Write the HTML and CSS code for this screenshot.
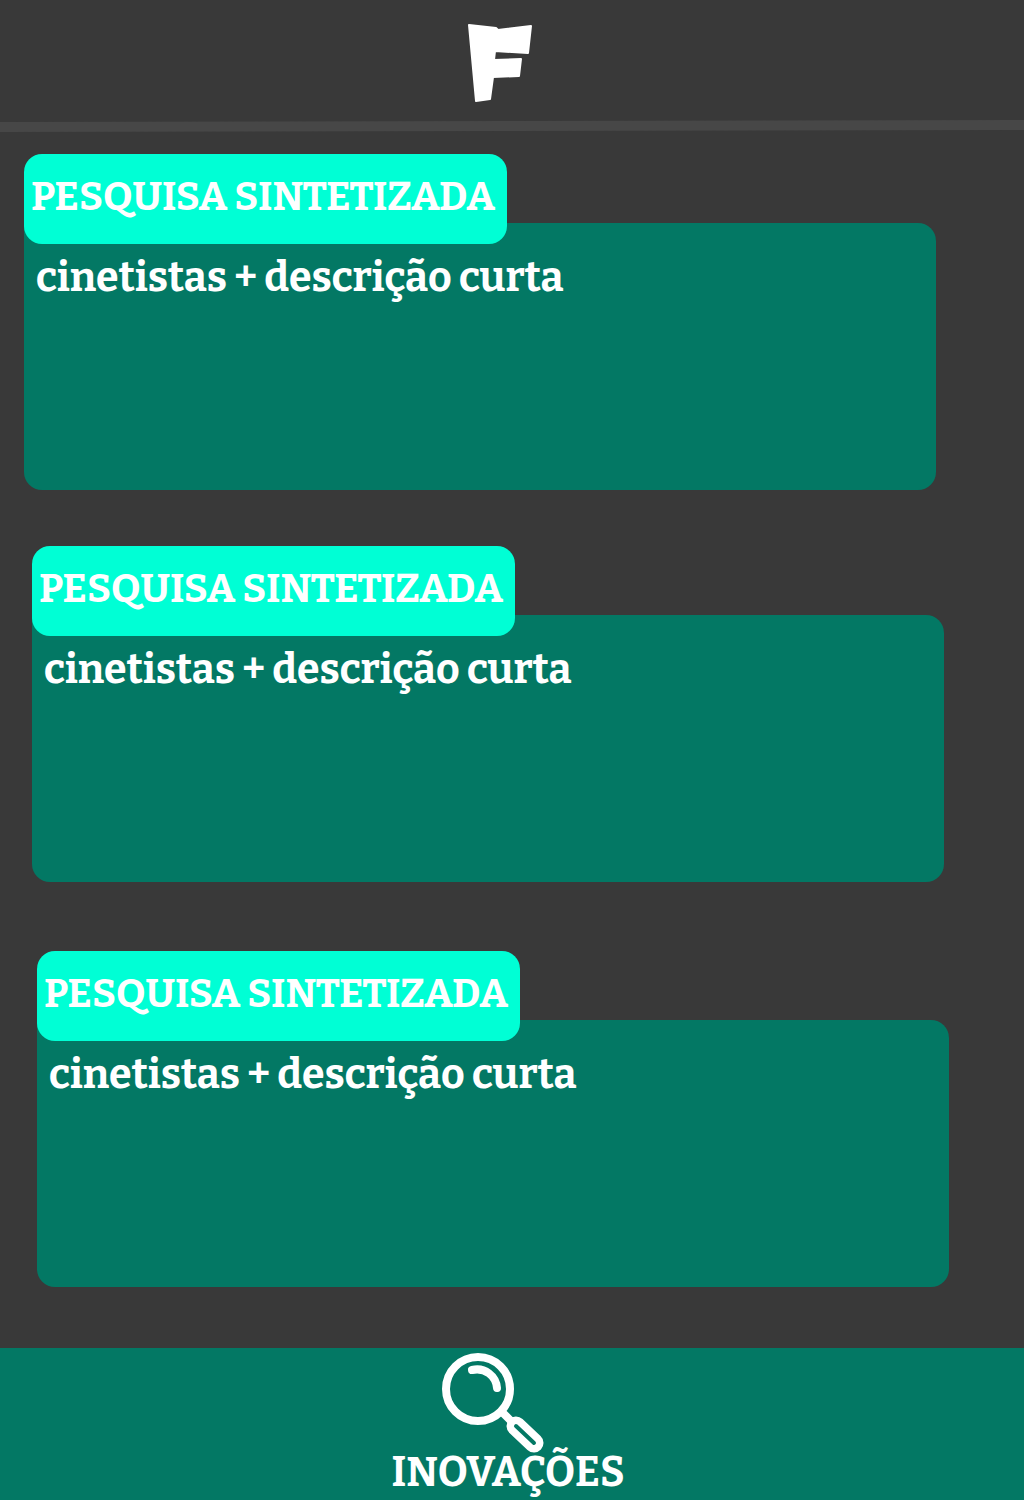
FILE: index.html
```html
<!DOCTYPE html>
<html lang="pt-BR">
<head>
  <meta charset="utf-8">
  <meta name="viewport" content="width=device-width, initial-scale=1">
  <title>Inovações</title>
  <link rel="stylesheet" href="styles.css">
</head>
<body>
  <header class="header">
    <svg class="logo" viewBox="0 0 64 78" role="img" aria-label="F">
      <path d="M1 1 L28 4 L30 6 L63 2 L60 29 L27 27 L26 36 L53 35 L51 52 L25 53 L22 75 L8 77 Z" fill="#fff" stroke="#fff" stroke-width="2" stroke-linejoin="round"/>
    </svg>
  </header>
  <svg class="divider" viewBox="0 0 1024 12" preserveAspectRatio="none" aria-hidden="true">
    <path d="M0 2 L1024 0 V10 L0 12 Z" fill="#474747"/>
  </svg>

  <main class="results">
    <article class="card card-first">
      <h2 class="card-title">PESQUISA SINTETIZADA</h2>
      <p class="card-body">cinetistas + descrição curta</p>
    </article>
    <article class="card card-second">
      <h2 class="card-title">PESQUISA SINTETIZADA</h2>
      <p class="card-body">cinetistas + descrição curta</p>
    </article>
    <article class="card card-third">
      <h2 class="card-title">PESQUISA SINTETIZADA</h2>
      <p class="card-body">cinetistas + descrição curta</p>
    </article>
  </main>

  <footer class="footer">
    <svg class="search-icon" viewBox="0 0 104 102" fill="none" stroke="#fff" stroke-linecap="round" stroke-linejoin="round" aria-hidden="true">
      <circle cx="37" cy="37" r="32" stroke-width="8"/>
      <path d="M31 18 C44 15 55 24 56 36" stroke-width="8"/>
      <path d="M61 60 L70 69" stroke-width="8"/>
      <path d="M75 74 L93 91" stroke-width="19"/>
      <path d="M75 74 L93 91" stroke="#037864" stroke-width="4"/>
    </svg>
    <span class="footer-label">INOVAÇÕES</span>
  </footer>
</body>
</html>
```
FILE: styles.css
```css
* {
  box-sizing: border-box;
}

body {
  display: flex;
  flex-direction: column;
  min-height: 100vh;
  margin: 0;
  background: #393939;
  color: #fff;
  font-family: Bitter, "DejaVu Serif Condensed", "DejaVu Serif", serif;
  font-size: 41px;
  font-weight: 700;
  line-height: 48px;
}

.header {
  display: flex;
  justify-content: center;
  padding: 24px 24px 19px 0;
}

.logo {
  width: 64px;
  height: 78px;
}

.divider {
  display: block;
  width: 100%;
  height: 12px;
  margin-top: -1px;
}

.results {
  flex: 1;
  padding: 22px 75px 61px 24px;
}

.card {
  display: flex;
  flex-direction: column;
  align-items: flex-start;
  margin-right: 13px;
}

.card-second {
  margin: 56px 5px 0 8px;
}

.card-third {
  margin: 69px 0 0 13px;
}

.card-title {
  z-index: 1;
  min-height: 90px;
  margin: 0 0 -21px;
  padding: 19px 12px 23px 7px;
  border-radius: 18px;
  background: #00ffd5;
  font-size: 40px;
}

.card-body {
  align-self: stretch;
  min-height: 267px;
  margin: 0;
  padding: 31px 12px;
  border-radius: 0 18px 18px 18px;
  background: #037864;
}

.footer {
  display: flex;
  flex-direction: column;
  align-items: center;
  min-height: 152px;
  padding: 4px 8px 3px 0;
  background: #037864;
}

.search-icon {
  width: 104px;
  height: 102px;
  margin-right: 30px;
}

.footer-label {
  margin-top: -5px;
}
```
